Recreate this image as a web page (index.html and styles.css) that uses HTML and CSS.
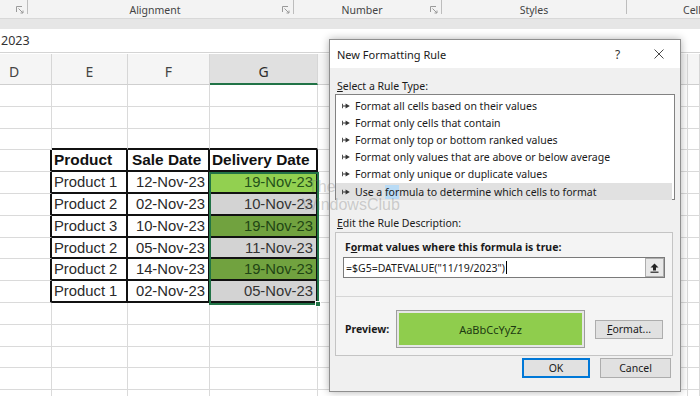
FILE: index.html
```html
<!DOCTYPE html>
<html lang="en">
  <head>
    <meta charset="UTF-8" />
    <meta name="viewport" content="width=device-width, initial-scale=1.0" />
    <title>New Formatting Rule</title>
    <link rel="stylesheet" href="styles.css">
  </head>
  <body>
    <div class="ribbon">
      <div class="group g0"><span class="label"></span><svg class="launcher" viewBox="0 0 8 8"><path d="M0.5 6V0.5H6" /><path d="M2.5 2.5L7 7M7 4.5V7H4.5" /></svg></div>
      <div class="group g1"><span class="label">Alignment</span><svg class="launcher" viewBox="0 0 8 8"><path d="M0.5 6V0.5H6" /><path d="M2.5 2.5L7 7M7 4.5V7H4.5" /></svg></div>
      <div class="group g2"><span class="label">Number</span><svg class="launcher" viewBox="0 0 8 8"><path d="M0.5 6V0.5H6" /><path d="M2.5 2.5L7 7M7 4.5V7H4.5" /></svg></div>
      <div class="group g3"><span class="label">Styles</span></div>
      <div class="group g4"><span class="label">Cells</span></div>
    </div>
    <div class="band"></div>
    <div class="formula-bar">2023</div>

    <div class="sheet">
      <div class="row head"><div class="d">D</div><div>E</div><div>F</div><div class="picked">G</div><div></div><div></div></div>
      <div class="row"><div></div><div></div><div></div><div></div><div></div><div></div></div>
      <div class="row"><div></div><div></div><div></div><div></div><div></div><div></div></div>
      <div class="row"><div></div><div class="tt"></div><div class="tt"></div><div class="tt"></div><div></div><div></div></div>
      <div class="row"><div class="tl"></div><div class="t th">Product</div><div class="t th">Sale Date</div><div class="t th">Delivery Date</div><div></div><div></div></div>
      <div class="row"><div class="tl"></div><div class="t">Product 1</div><div class="t num">12-Nov-23</div><div class="t num hit">19-Nov-23</div><div></div><div></div></div>
      <div class="row"><div class="tl"></div><div class="t">Product 2</div><div class="t num">02-Nov-23</div><div class="t num miss">10-Nov-23</div><div></div><div></div></div>
      <div class="row"><div class="tl"></div><div class="t">Product 3</div><div class="t num">10-Nov-23</div><div class="t num hit dim">19-Nov-23</div><div></div><div></div></div>
      <div class="row"><div class="tl"></div><div class="t">Product 2</div><div class="t num">05-Nov-23</div><div class="t num miss">11-Nov-23</div><div></div><div></div></div>
      <div class="row"><div class="tl"></div><div class="t">Product 2</div><div class="t num">14-Nov-23</div><div class="t num hit dim">19-Nov-23</div><div></div><div></div></div>
      <div class="row"><div class="tl"></div><div class="t">Product 1</div><div class="t num">02-Nov-23</div><div class="t num miss">05-Nov-23</div><div></div><div></div></div>
      <div class="row"><div></div><div></div><div></div><div></div><div></div><div></div></div>
      <div class="row"><div></div><div></div><div></div><div></div><div></div><div></div></div>
      <div class="row"><div></div><div></div><div></div><div></div><div></div><div></div></div>
      <div class="row"><div></div><div></div><div></div><div></div><div></div><div></div></div>
      <div class="row"><div></div><div></div><div></div><div></div><div></div><div></div></div>
      <div class="selection"><span class="handle"></span></div>
    </div>

    <div class="watermark"><span>The</span><span>WindowsClub</span></div>

    <div class="dialog">
      <div class="title">
        <span class="title-text">New Formatting Rule</span>
        <span class="help">?</span>
        <svg class="close" viewBox="0 0 10 10"><path d="M0.5 0.5L9.5 9.5M9.5 0.5L0.5 9.5" /></svg>
      </div>
      <div class="body">
        <div class="caption"><u>S</u>elect a Rule Type:</div>
        <ul class="rule-list">
          <li><svg class="arrow" viewBox="0 0 9 7"><path d="M0 1h1v5H0zM1 3h4v1H1zM4 0.5L9 3.5 4 6.5z" /></svg><span>Format all cells based on their values</span></li>
          <li><svg class="arrow" viewBox="0 0 9 7"><path d="M0 1h1v5H0zM1 3h4v1H1zM4 0.5L9 3.5 4 6.5z" /></svg><span>Format only cells that contain</span></li>
          <li><svg class="arrow" viewBox="0 0 9 7"><path d="M0 1h1v5H0zM1 3h4v1H1zM4 0.5L9 3.5 4 6.5z" /></svg><span>Format only top or bottom ranked values</span></li>
          <li><svg class="arrow" viewBox="0 0 9 7"><path d="M0 1h1v5H0zM1 3h4v1H1zM4 0.5L9 3.5 4 6.5z" /></svg><span>Format only values that are above or below average</span></li>
          <li><svg class="arrow" viewBox="0 0 9 7"><path d="M0 1h1v5H0zM1 3h4v1H1zM4 0.5L9 3.5 4 6.5z" /></svg><span>Format only unique or duplicate values</span></li>
          <li class="active"><svg class="arrow" viewBox="0 0 9 7"><path d="M0 1h1v5H0zM1 3h4v1H1zM4 0.5L9 3.5 4 6.5z" /></svg><span>Use a <span class="mark">for</span>mula to determine which cells to format</span></li>
        </ul>
        <div class="caption second"><u>E</u>dit the Rule Description:</div>
        <div class="desc">
          <div class="desc-label">F<u>o</u>rmat values where this formula is true:</div>
          <div class="formula">
            <span class="formula-text">=$G5=DATEVALUE("11/19/2023")</span><span class="caret"></span>
            <button class="range"><svg viewBox="0 0 9 10"><path d="M4.5 0.5L8.5 4.5H6V7.5H3V4.5H0.5z" /><path d="M0.5 8.6h8v1.2h-8z" /></svg></button>
          </div>
          <div class="sep"></div>
          <div class="preview-row">
            <span class="preview-label">Preview:</span>
            <div class="preview"><div class="preview-fill">AaBbCcYyZz</div></div>
            <button class="btn format"><u>F</u>ormat...</button>
          </div>
        </div>
        <div class="actions">
          <button class="btn ok">OK</button>
          <button class="btn cancel">Cancel</button>
        </div>
      </div>
    </div>
  </body>
</html>
```

FILE: styles.css
```css
* {
  box-sizing: border-box;
}
body {
  margin: 0;
  width: 700px;
  height: 396px;
  overflow: hidden;
  position: relative;
  font-family: 'Noto Sans', sans-serif;
  background: #fff;
  color: #222;
}

/* Ribbon group labels */
.ribbon {
  display: flex;
  height: 18px;
  background: #f3f3f3;
  font-size: 10.5px;
  color: #444;
  overflow: hidden;
}
.group {
  display: flex;
  flex: none;
  height: 14px;
  border-right: 1px solid #bdbdbd;
}
.group .label {
  flex: 1;
  text-align: center;
  line-height: 20px;
  white-space: nowrap;
}
.g0 { width: 28px; }
.g1 { width: 266px; }
.g2 { width: 148px; }
.g3 { width: 185px; }
.g4 { flex: 1; border-right: none; }
.g4 .label {
  text-align: left;
  padding-left: 56px;
}
.launcher {
  width: 8px;
  height: 8px;
  margin: 6px 3px 0 0;
  fill: none;
  stroke: #9a9a9a;
  stroke-width: 1;
}
.band {
  height: 11px;
  background: #e6e6e6;
  border-top: 1px solid #d8d8d8;
}
.formula-bar {
  height: 24px;
  line-height: 24px;
  font-size: 12.5px;
  color: #333;
  padding-left: 1px;
  border-bottom: 1px solid #d4d4d4;
}

/* Worksheet */
.sheet {
  position: relative;
  margin-top: 1px;
}
.row {
  display: grid;
  grid-template-columns: 52px 76px 82px 108px 370px 1fr;
  height: 21.8px;
  font-family: 'Liberation Sans', sans-serif;
  font-size: 14.8px;
}
.row > div {
  border-right: 1px solid #dadada;
  border-bottom: 1px solid #dadada;
  white-space: nowrap;
  overflow: hidden;
  line-height: 20px;
}
.row.head {
  height: 31px;
  background: #f5f5f5;
  font-family: 'Noto Sans', sans-serif;
  font-size: 14px;
  color: #444;
}
.row.head > div {
  text-align: center;
  line-height: 36px;
  border-right-color: #d6d6d6;
  border-bottom-color: #cfcfcf;
}
.row.head > div.d {
  text-align: left;
  padding-left: 9px;
}
.row.head > div.picked {
  background: #e0e0e0;
  border-bottom: 2px solid #217346;
  color: #2c2c2c;
}

/* Table borders */
.row > div.tt {
  border-bottom: 2px solid #111;
}
.row > div.tl {
  border-right: 2px solid #111;
}
.row > div.t {
  border-right: 2px solid #111;
  border-bottom: 2px solid #111;
  padding: 0 3px 0 2px;
  color: #2a2a2a;
}
.row > div.th {
  font-weight: bold;
  font-size: 15.4px;
  color: #111;
}
.row > div.t:nth-child(3).th {
  padding-left: 4px;
}
.row > div.num {
  text-align: right;
}
.row > div.hit {
  background: #92d050;
  color: #24521a;
}
.row > div.hit.dim {
  background: #71a23f;
  color: #1f4514;
}
.row > div.miss {
  background: #d3d3d3;
  color: #333;
}

.selection {
  position: absolute;
  left: 209px;
  top: 118px;
  width: 110px;
  height: 133px;
  border: 2px solid #217346;
}
.handle {
  position: absolute;
  right: -4px;
  bottom: -4px;
  width: 6px;
  height: 6px;
  background: #217346;
  border: 1px solid #fff;
}

.watermark {
  position: absolute;
  left: 302px;
  top: 178px;
  display: flex;
  flex-direction: column;
  font-family: 'Liberation Sans', sans-serif;
  font-size: 16px;
  line-height: 18px;
  color: rgba(110, 110, 110, 0.3);
  z-index: 5;
  pointer-events: none;
}
.watermark span:first-child {
  padding-left: 6px;
}

/* Dialog */
.dialog {
  position: absolute;
  left: 329px;
  top: 39px;
  width: 352px;
  height: 353px;
  background: #f0f0f0;
  border: 1px solid #8f8f8f;
  box-shadow: 0 0 8px rgba(0, 0, 0, 0.3);
  font-size: 10.5px;
  color: #1a1a1a;
}
.title {
  display: flex;
  align-items: center;
  height: 28px;
  background: #fff;
  padding-left: 7px;
}
.title-text {
  flex: 1;
  font-size: 11px;
}
.help {
  font-size: 12px;
  width: 14px;
  margin-right: 25px;
  color: #333;
}
.close {
  width: 10px;
  height: 10px;
  margin-right: 16px;
  fill: none;
  stroke: #333;
  stroke-width: 0.9;
}
.body {
  padding: 0 5px;
}
.caption {
  margin-top: 11px;
  line-height: 14px;
  padding-left: 2px;
}
.caption.second {
  margin-top: 16px;
}
.rule-list {
  list-style: none;
  margin: 1px 0 0;
  padding: 2px 0 0;
  height: 106px;
  width: 340px;
  background: #fff;
  border: 1px solid #828282;
}
.rule-list li {
  display: flex;
  align-items: center;
  height: 17.2px;
  padding-left: 6px;
  white-space: nowrap;
}
.rule-list li.active {
  background: #e1e1e1;
  margin-right: 2px;
}
.arrow {
  width: 8px;
  height: 6px;
  margin-right: 5px;
  fill: #333;
}
.mark {
  background: #b9dbf5;
}
.desc {
  margin-top: 2px;
  width: 338px;
  height: 124px;
  border: 1px solid #c4c4c4;
  background: #f4f4f4;
}
.desc-label {
  margin: 7px 0 0 9px;
  line-height: 14px;
  font-weight: bold;
}
.formula {
  display: flex;
  align-items: center;
  margin: 3px 7px 0;
  height: 21px;
  background: #fff;
  border: 1px solid #7a7a7a;
  padding-left: 2px;
}
.caret {
  width: 1px;
  height: 13px;
  background: #000;
  margin-left: 1px;
}
.range {
  margin-left: auto;
  width: 19px;
  height: 19px;
  padding: 0;
  background: #e8e8e8;
  border: 1px solid #adadad;
  display: flex;
  align-items: center;
  justify-content: center;
}
.range svg {
  width: 9px;
  height: 10px;
  fill: #222;
}
.sep {
  margin-top: 18px;
  height: 1px;
  background: #d6d6d6;
}
.preview-row {
  display: flex;
  align-items: center;
  margin-top: 13px;
  padding-left: 9px;
  height: 38px;
}
.preview-label {
  width: 51px;
  font-weight: bold;
}
.preview {
  width: 189px;
  height: 38px;
  border: 1px solid #9d9d9d;
  background: #e6e6e6;
  padding: 2px;
}
.preview-fill {
  height: 100%;
  background: #8fcd4d;
  display: flex;
  align-items: center;
  justify-content: center;
  font-size: 11px;
  color: #1d3a12;
}
.btn {
  font-family: 'Noto Sans', sans-serif;
  font-size: 10.5px;
  color: #1a1a1a;
  background: #e1e1e1;
  border: 1px solid #adadad;
  padding: 0;
}
.btn.format {
  width: 68px;
  height: 19px;
  margin-left: 10px;
}
.actions {
  display: flex;
  justify-content: flex-end;
  gap: 10px;
  margin-top: 2px;
  padding-right: 4px;
}
.btn.ok {
  width: 68px;
  height: 20px;
  border-color: #0078d7;
  box-shadow: inset 0 0 0 1px #0078d7;
}
.btn.cancel {
  width: 71px;
  height: 20px;
}
```
